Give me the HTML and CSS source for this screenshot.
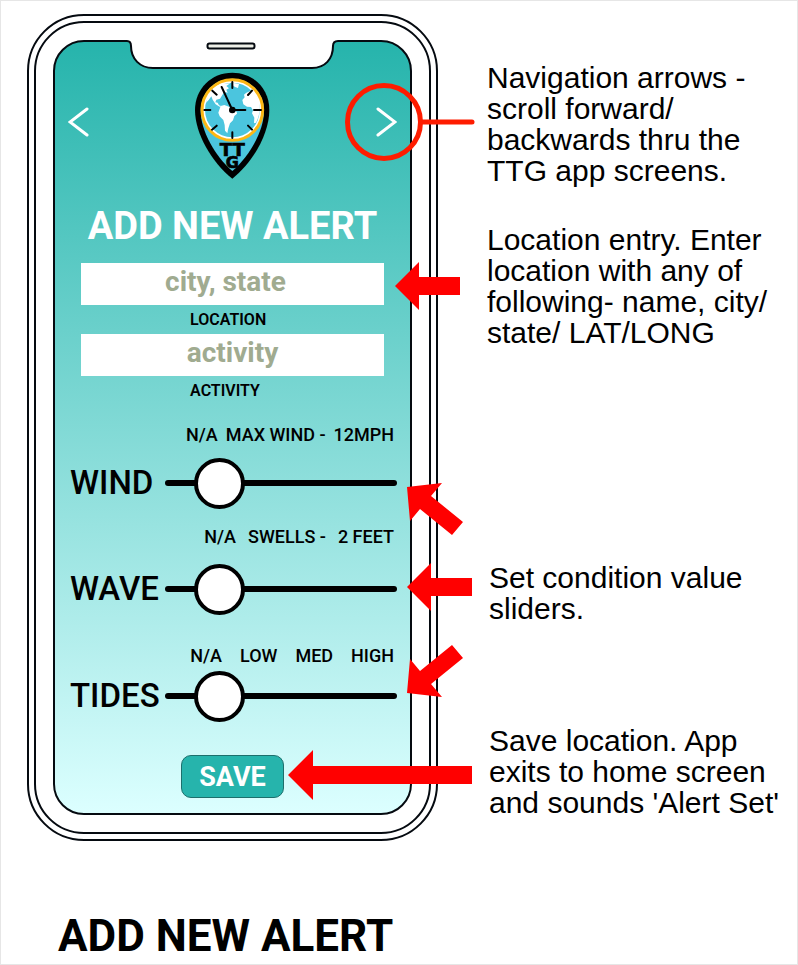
FILE: index.html
```html
<!DOCTYPE html>
<html lang="en">
<head>
<meta charset="utf-8">
<meta name="viewport" content="width=device-width, initial-scale=1">
<title>Add New Alert</title>
<link rel="stylesheet" href="styles.css">
</head>
<body>
<main class="sheet">
  <section class="phone" aria-label="Phone">
    <div class="bezel">
      <form class="screen">
        <svg class="notch" viewBox="123 39 219 31" aria-hidden="true">
          <path d="M127 38V41C130 41 131 43 131 46C131 59 140 68 153 68H312C325 68 333 59 333 46C333 43 335 41 338 41V38Z" fill="#fff"/>
          <path d="M123 41H127C130 41 131 43 131 46C131 59 140 68 153 68H312C325 68 333 59 333 46C333 43 335 41 338 41H342" fill="none" stroke="#050a10" stroke-width="2"/>
          <rect x="207.500" y="43.500" width="47" height="5" rx="2" fill="#eef0e8" stroke="#050a10" stroke-width="2"/>
        </svg>
        <nav class="nav">
          <button class="nav-button" type="button" aria-label="Back">
            <svg width="22" height="30" viewBox="0 0 22 30"><path d="M19 2L2 15L19 28" class="chevron"/></svg>
          </button>
          <svg class="logo" viewBox="45 36 225 321" role="img" aria-label="TTG">
            <path d="M157 38C94 38 45 86 45 150C45 220 94 306 157 356C220 306 268 220 268 150C268 86 220 38 157 38Z"/>
            <path d="M157 56C102 56 62 100 62 152C62 212 105 288 157 333C209 288 252 212 252 152C252 100 212 56 157 56Z" fill="#4bc5de"/>
            <circle cx="157" cy="150" r="91" fill="#fff" stroke="#fdb714" stroke-width="9"/>
            <circle cx="157" cy="150" r="82" fill="#4bc5de"/>
            <path fill="#fff" d="M78 128C84 100 101 80 122 72L151 70L139 78L147 85L139 89L143 98L133 96L127 105L120 116L109 119L106 127L113 128L117 136L125 139L119 140L107 133L98 119L94 109L86 120Z"/>
            <path fill="#fff" d="M158 68L177 72L174 84L165 81L158 76Z"/>
            <path fill="#fff" d="M122 138L133 135L147 140L159 145L161 151L170 155L171 161L163 168L159 181L150 190L145 205L142 220L135 212L134 195L130 180L119 169L115 158Z"/>
            <path fill="#fff" d="M198 99L192 104L194 112L187 120L190 133L201 140L213 141L219 151L216 160L223 173L222 190L228 188C240 166 243 137 234 117L222 95L212 92Z"/>
            <path d="M157 66V84M157 217V234M73 150H91M222 150H243M97 92L110 104M204 105L216 92M96 209L110 197M204 197L216 209M157 150H196M157 150L125 81" fill="none" stroke="#000" stroke-width="6" stroke-linecap="round"/>
            <circle cx="157" cy="150" r="10"/>
            <text class="logo-text" x="157" y="287" font-size="54">TT</text>
            <text class="logo-text" x="157" y="325" font-size="48">G</text>
          </svg>
          <button class="nav-button" type="button" aria-label="Forward">
            <svg width="22" height="30" viewBox="0 0 22 30"><path d="M3 2L20 15L3 28" class="chevron"/></svg>
          </button>
          <svg class="callout callout-nav" viewBox="0 0 130 78" aria-hidden="true">
            <g fill="none" stroke="#fe1c00" stroke-width="5" stroke-linecap="round"><circle cx="39" cy="39" r="36.500"/><path d="M76 39H127"/></g>
          </svg>
        </nav>

        <h1 class="title">ADD NEW ALERT</h1>

        <div class="fields">
          <div class="field">
            <input class="entry entry-location" id="location" type="text" placeholder="city, state">
            <svg class="callout callout-location" viewBox="0 0 65 48" aria-hidden="true"><path class="arrow" d="M0 24L24 0V15H65V33H24V48Z"/></svg>
          </div>
          <label class="caption" for="location">LOCATION</label>
          <div class="field">
            <input class="entry" id="activity" type="text" placeholder="activity">
          </div>
          <label class="caption" for="activity">ACTIVITY</label>
        </div>

        <div class="condition condition-wind">
          <div class="scale"><span>N/A</span><span>MAX WIND -</span><span>12MPH</span></div>
          <div class="control">
            <label for="wind">WIND</label>
            <input class="slider" id="wind" type="range" value="16">
            <svg class="callout callout-up" viewBox="0 0 57 52" aria-hidden="true"><path class="arrow" d="M0 4L35 0L24 13L56 39L45 52L13 26L3 38Z"/></svg>
          </div>
        </div>
        <div class="condition condition-wave">
          <div class="scale"><span>N/A</span><span>SWELLS -</span><span>2 FEET</span></div>
          <div class="control">
            <label for="wave">WAVE</label>
            <input class="slider" id="wave" type="range" value="16">
            <svg class="callout callout-level" viewBox="0 0 65 48" aria-hidden="true"><path class="arrow" d="M0 24L24 0V15H65V33H24V48Z"/></svg>
          </div>
        </div>
        <div class="condition condition-tides">
          <div class="scale"><span>N/A</span><span>LOW</span><span>MED</span><span>HIGH</span></div>
          <div class="control">
            <label for="tides">TIDES</label>
            <input class="slider" id="tides" type="range" value="16">
            <svg class="callout callout-down" viewBox="0 0 57 52" aria-hidden="true"><path class="arrow" d="M0 48L35 52L24 39L56 13L45 0L13 26L3 14Z"/></svg>
          </div>
        </div>

        <div class="actions">
          <button class="save" type="button">SAVE</button>
          <svg class="callout callout-save" viewBox="0 0 184 50" aria-hidden="true"><path class="arrow" d="M0 25L25 0V16H184V34H25V50Z"/></svg>
        </div>
      </form>
    </div>
  </section>

  <aside class="notes">
    <p>Navigation arrows -<br>scroll forward/<br>backwards thru the<br>TTG app screens.</p>
    <p class="note-location">Location entry. Enter<br>location with any of<br>following- name, city/<br>state/ LAT/LONG</p>
    <p class="note-sliders">Set condition value<br>sliders.</p>
    <p class="note-save">Save location. App<br>exits to home screen<br>and sounds 'Alert Set'</p>
  </aside>

  <h2 class="sheet-title">ADD NEW ALERT</h2>
</main>
</body>
</html>
```
FILE: styles.css
```css
* {
  box-sizing: border-box;
}

body {
  margin: 0;
  background: #fff;
  color: #000;
  font-family: Roboto, "Liberation Sans", sans-serif;
}

.sheet {
  display: grid;
  grid-template-columns: minmax(0, 411fr) minmax(0, 310fr);
  column-gap: 49px;
  align-items: start;
  min-height: 100vh;
  padding: 13px 0 0 26px;
  border: 1px solid #e6e6e6;
}

/* Phone frame */
.phone {
  padding: 5px;
  border: 2px solid #050a10;
  border-radius: 57px;
}

.bezel {
  padding: 17px;
  border: 2px solid #050a10;
  border-radius: 50px;
}

.screen {
  position: relative;
  padding: 30px 13px 15px;
  border: 2px solid #050a10;
  border-radius: 31px;
  background: linear-gradient(#26b4ac, #dcffff);
}

.notch {
  position: absolute;
  top: -3px;
  left: 50%;
  width: 219px;
  height: 31px;
  margin-left: -110px;
}

/* Top navigation */
.nav {
  position: relative;
  display: flex;
  justify-content: space-between;
  align-items: flex-start;
}

.nav-button {
  display: flex;
  align-items: center;
  width: 22px;
  height: 100px;
  padding: 0;
  border: 0;
  background: none;
}

.chevron {
  fill: none;
  stroke: #fff;
  stroke-width: 3;
  stroke-linecap: round;
}

.logo {
  width: 75px;
  height: 107px;
}

.logo-text {
  font-family: "DejaVu Sans", sans-serif;
  font-weight: 700;
  text-anchor: middle;
  stroke: #000;
  stroke-width: 2px;
}

.title {
  margin: 27px 0 17px;
  font-size: 38px;
  font-weight: 700;
  line-height: 40px;
  text-align: center;
  white-space: nowrap;
  color: #fff;
}

/* Text entries */
.fields {
  display: flex;
  flex-direction: column;
  padding: 0 13px;
}

.field {
  position: relative;
  display: flex;
}

.entry {
  width: 100%;
  height: 42px;
  padding: 0 0 6px;
  border: 0;
  background: #fff;
  color: #a0ab90;
  font: 700 28px/36px Roboto, "Liberation Sans", sans-serif;
  text-align: center;
}

.entry-location {
  padding-right: 14px;
}

.entry::placeholder {
  color: #a0ab90;
  opacity: 1;
}

.caption {
  padding-left: 36%;
  font-size: 16px;
  font-weight: 600;
  line-height: 29px;
}

/* Sliders */
.condition-wind {
  padding-top: 19px;
}

.condition-wave {
  padding-top: 18px;
}

.condition-tides {
  padding-top: 31px;
}

.scale {
  display: flex;
  justify-content: flex-end;
  gap: 8px;
  padding-right: 3px;
  font-size: 18px;
  font-weight: 500;
  line-height: 22px;
  white-space: nowrap;
}

.condition-wave .scale {
  gap: 12px;
}

.condition-tides .scale {
  gap: 18px;
}

.control {
  position: relative;
  display: flex;
  align-items: center;
  justify-content: space-between;
  padding-left: 2px;
}

.condition-wind .control {
  margin-top: 12px;
}

.condition-wave .control {
  margin-top: 16px;
}

.condition-tides .control {
  margin-top: 4px;
}

.control label {
  font-size: 33px;
  font-weight: 500;
  line-height: 50px;
}

.slider {
  flex: 0 0 71%;
  height: 50px;
  margin: 0;
  background: none;
  appearance: none;
}

.slider::-webkit-slider-runnable-track {
  height: 6px;
  border-radius: 3px;
  background: #000;
}

.slider::-webkit-slider-thumb {
  width: 51px;
  height: 51px;
  margin-top: -22px;
  border: 4px solid #000;
  border-radius: 50%;
  background: #fff;
  appearance: none;
}

/* Save */
.actions {
  position: relative;
  display: flex;
  justify-content: center;
  margin-top: 34px;
}

.save {
  width: 103px;
  height: 43px;
  padding: 0;
  border: 1px solid #1d6f6c;
  border-radius: 10px;
  background: #26b4ac;
  color: #fff;
  font: 700 27px/40px Roboto, "Liberation Sans", sans-serif;
}

/* Callout marks laid over the phone */
.callout {
  position: absolute;
  z-index: 1;
  pointer-events: none;
}

.arrow {
  fill: #f00;
}

.callout-nav {
  top: 11px;
  left: calc(100% - 52px);
  width: 130px;
  height: 78px;
}

.callout-location {
  top: -1px;
  left: calc(100% + 11px);
  width: 65px;
  height: 48px;
}

.callout-up,
.callout-down {
  left: calc(100% + 10px);
  width: 57px;
  height: 52px;
}

.callout-up {
  top: 25px;
}

.callout-down {
  top: -26px;
}

.callout-level {
  top: -1px;
  left: calc(100% + 10px);
  width: 65px;
  height: 48px;
}

.callout-save {
  top: -5px;
  left: calc(50% + 55px);
  width: 184px;
  height: 50px;
}

/* Notes */
.notes {
  padding-top: 48px;
  font-family: "Liberation Sans", Arial, sans-serif;
  font-size: 30px;
  line-height: 31px;
  white-space: nowrap;
}

.notes p {
  margin: 0;
}

.notes .note-location {
  margin-top: 38px;
}

.notes .note-sliders {
  margin-top: 214px;
  padding-left: 2px;
}

.notes .note-save {
  margin-top: 101px;
  padding-left: 2px;
}

.sheet-title {
  grid-column: 1 / -1;
  margin: 67px 0 0 31px;
  font-size: 44px;
  font-weight: 700;
  line-height: 56px;
  white-space: nowrap;
}
```
